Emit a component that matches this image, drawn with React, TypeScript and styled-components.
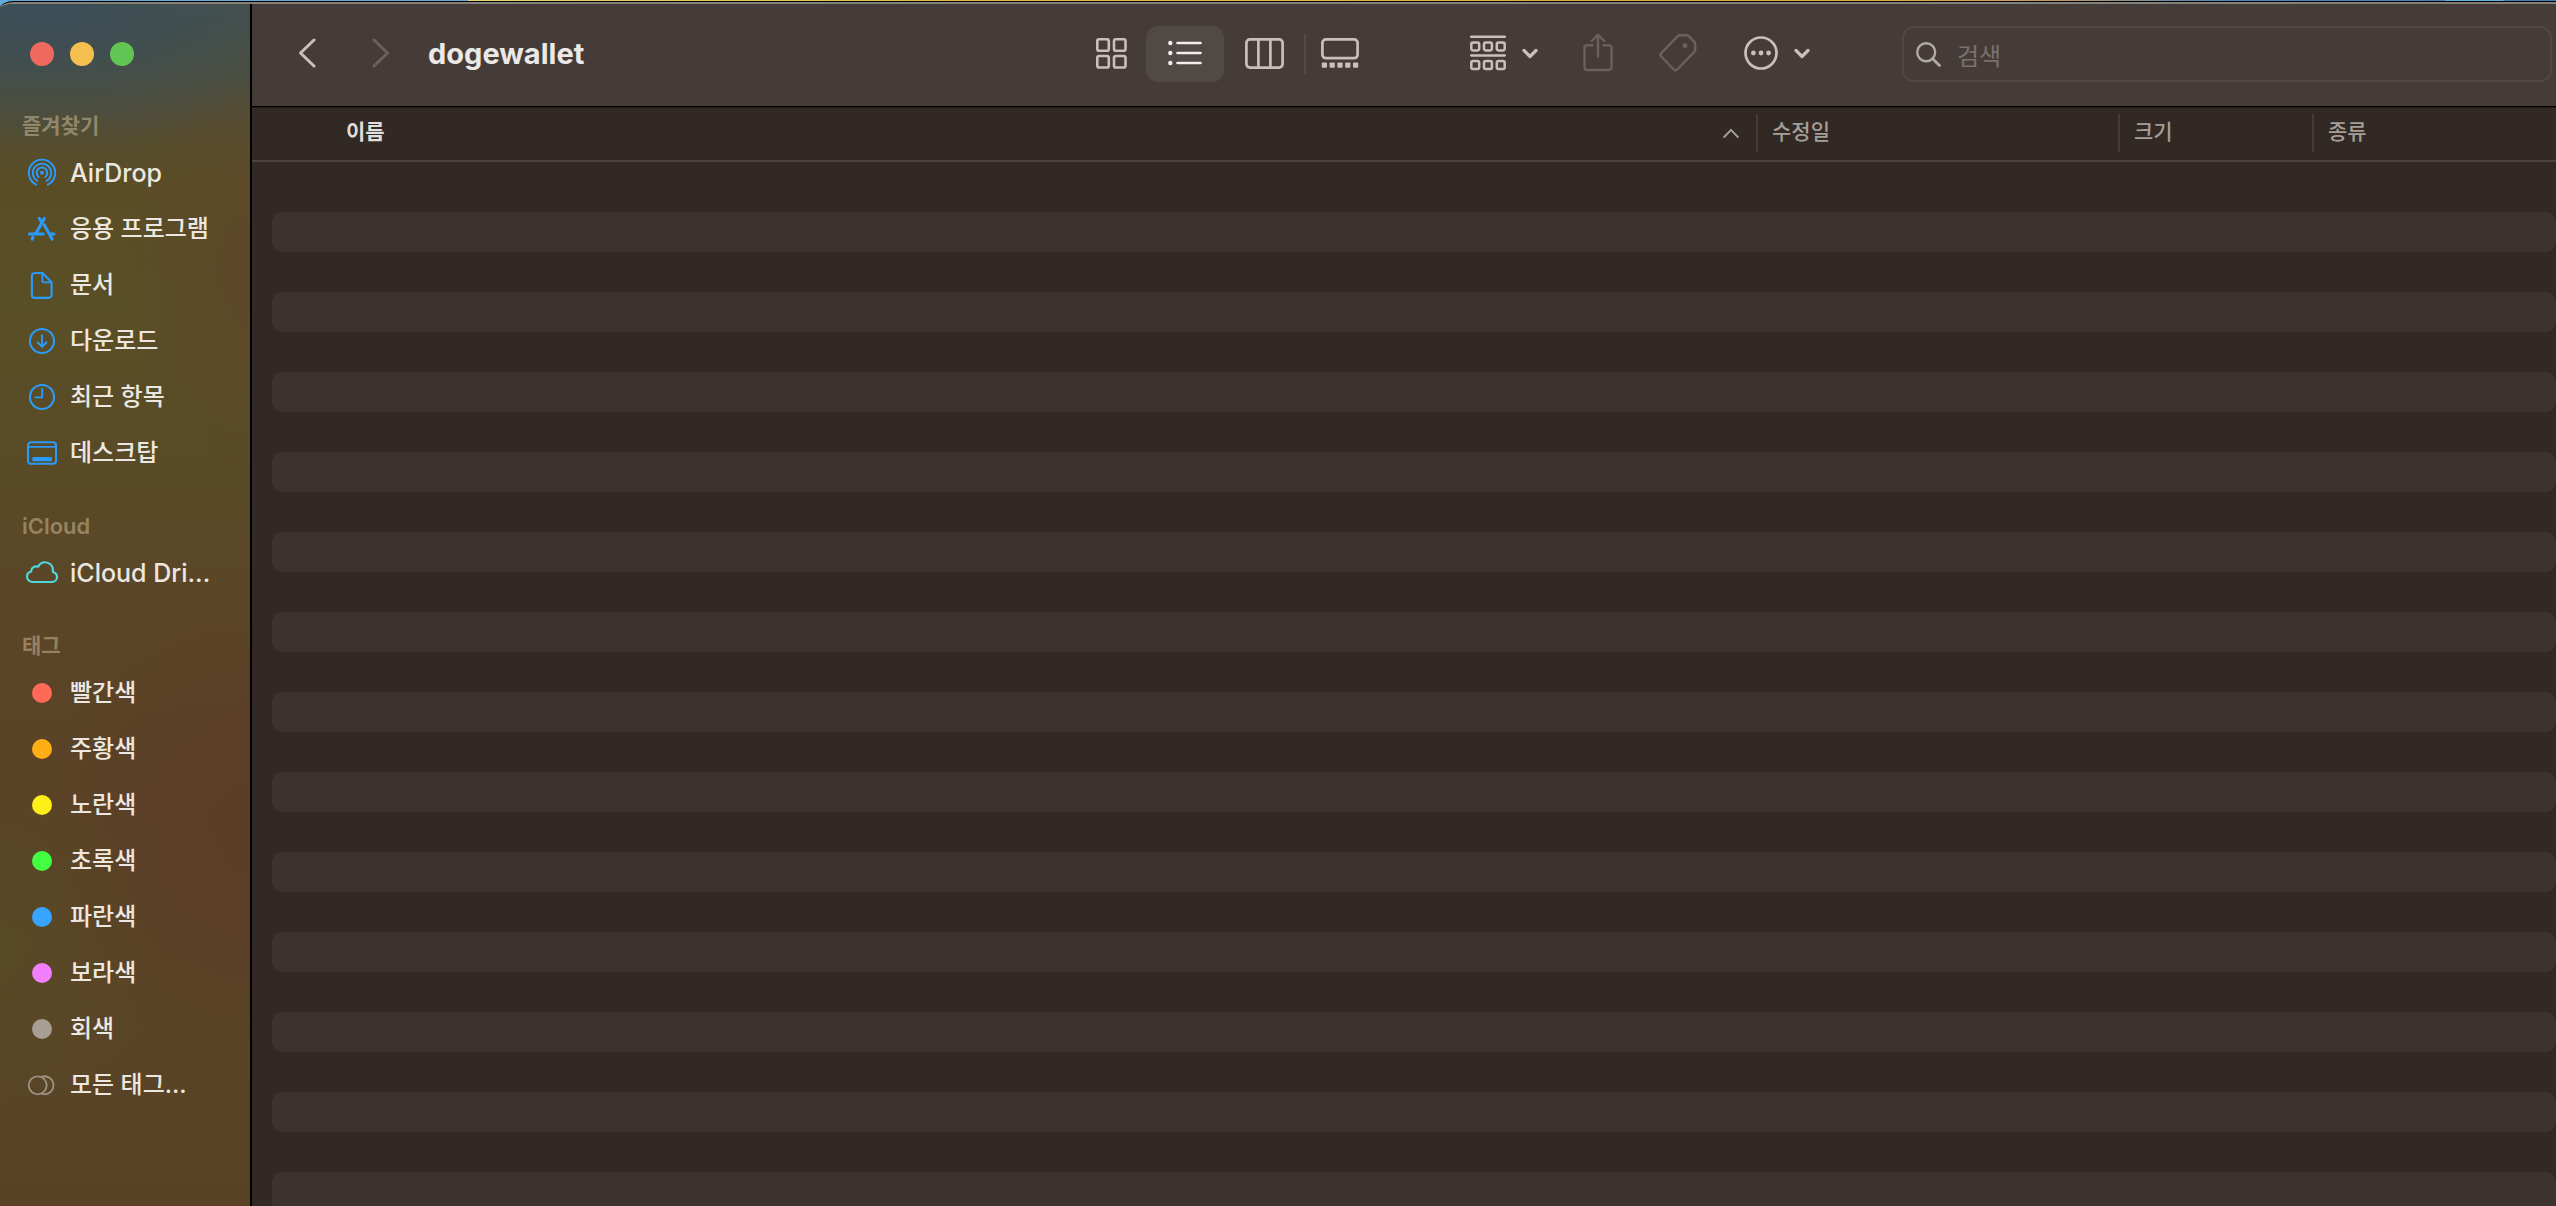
import React from "react";
import styled, { createGlobalStyle } from "styled-components";

const GlobalStyle = createGlobalStyle`
  *, *::before, *::after { box-sizing: border-box; }
  body {
    margin: 0;
    font-family: Inter, "Noto Sans CJK KR", "Noto Sans", sans-serif;
    -webkit-font-smoothing: antialiased;
  }
  button, input { font: inherit; color: inherit; }
  svg { display: block; flex: none; }
`;

const Desktop = styled.div`
  height: 100vh;
  padding-top: 1px;
  display: flex;
  overflow: hidden;
  background: linear-gradient(
    90deg,
    #62a9d8 0 18.3%,
    #e2d56c 18.3%,
    #e3b54e 38%,
    #e0a446 74%,
    #c79a5e 80%,
    #4a86bd 87%,
    #3f7fb8 95.6%,
    #62b4de 95.7% 97.9%,
    #3f7fb8 98%
  );
`;

const Window = styled.div`
  flex: 1;
  min-width: 0;
  display: flex;
  border-top: 1px solid #000;
  border-top-left-radius: 14px 8px;
  overflow: hidden;
  background: #453c39;
`;

const Frame = styled.div`
  flex: 1;
  min-width: 0;
  display: flex;
  border-top: 2px solid #83827a;
  border-top-left-radius: 14px 8px;
  overflow: hidden;
`;

const Sidebar = styled.aside`
  flex: none;
  width: 252px;
  border-right: 2px solid #000;
  background:
    radial-gradient(ellipse 200px 260px at 250px 830px, rgba(91, 60, 39, 0.9), rgba(91, 60, 39, 0) 100%),
    radial-gradient(ellipse 150px 200px at 0 940px, rgba(87, 74, 38, 0.8), rgba(87, 74, 38, 0) 100%),
    radial-gradient(ellipse 130px 200px at 250px 270px, rgba(93, 70, 41, 0.9), rgba(93, 70, 41, 0) 100%),
    radial-gradient(ellipse 330px 150px at 40px 0, rgba(60, 78, 86, 1) 10%, rgba(60, 78, 86, 0) 100%),
    linear-gradient(
      180deg,
      #475049 0,
      #544d33 110px,
      #5a4d26 180px,
      #594f26 300px,
      #594a27 480px,
      #5b4527 620px,
      #5a4226 780px,
      #5a4526 1000px,
      #594126 1200px
    );
`;

const TrafficLights = styled.div`
  display: flex;
  gap: 16px;
  height: 103px;
  padding: 38px 0 0 30px;
`;

const Light = styled.button<{ $color: string }>`
  width: 24px;
  height: 24px;
  padding: 0;
  border: 0;
  border-radius: 50%;
  background: ${(p) => p.$color};
`;

const Section = styled.section`
  & + & { margin-top: 26px; }
`;

const SectionTitle = styled.h2<{ $latin: boolean }>`
  margin: 0;
  padding-left: 22px;
  height: 38px;
  line-height: 38px;
  font-size: ${(p) => (p.$latin ? "22px" : "21px")};
  font-weight: 600;
  color: rgba(240, 220, 180, 0.42);
`;

const SideList = styled.ul`
  list-style: none;
  margin: 0;
  padding: 0;
`;

const SideLink = styled.a<{ $latin: boolean }>`
  display: flex;
  align-items: center;
  gap: 12px;
  height: 56px;
  padding-left: 26px;
  font-size: ${(p) => (p.$latin ? "25px" : "24px")};
  font-weight: 500;
  line-height: 32px;
  white-space: nowrap;
  color: #ece8e1;
  text-decoration: none;
`;

const TagSlot = styled.span`
  display: flex;
  justify-content: center;
  width: 32px;
`;

const TagDot = styled.span<{ $color: string }>`
  width: 20px;
  height: 20px;
  border-radius: 50%;
  background: ${(p) => p.$color};
`;

const Main = styled.main`
  flex: 1;
  min-width: 0;
  display: flex;
  flex-direction: column;
  background: #322924;
`;

const Toolbar = styled.header`
  flex: none;
  display: flex;
  align-items: center;
  height: 103px;
  padding: 0 4px 2px 46px;
  border-bottom: 1px solid #000;
  background: #453c39;
`;

const NavGroup = styled.nav`
  display: flex;
  gap: 56px;
  margin-right: 38px;
`;

const ToolButton = styled.button<{ $width?: number }>`
  display: flex;
  align-items: center;
  justify-content: center;
  gap: 16px;
  width: ${(p) => (p.$width ? `${p.$width}px` : "auto")};
  height: 56px;
  padding: 0 0 2px;
  border: 0;
  border-radius: 12px;
  background: none;
  color: #c9bfbc;

  &:disabled { color: #6a605d; }
  &[aria-pressed="true"] {
    background: #514946;
    color: #f1eeec;
  }
`;

const Title = styled.h1`
  flex: 1 1 0;
  min-width: 0;
  margin: 0;
  padding-right: 26px;
  font-size: 29px;
  font-weight: 700;
  line-height: 36px;
  color: #ebe8e6;
`;

const ViewGroup = styled.div`
  display: flex;
  align-items: center;
`;

const ViewDivider = styled.span`
  width: 2px;
  height: 40px;
  background: #524a47;
`;

const Actions = styled.div`
  display: flex;
  align-items: center;
  gap: 46px;
  padding: 0 92px 0 96px;
`;

const SearchBox = styled.label`
  flex: 1 1 0;
  min-width: 0;
  display: flex;
  align-items: center;
  gap: 16px;
  height: 56px;
  padding: 0 12px;
  border: 2px solid #504845;
  border-radius: 12px;
  color: #b1aaa6;
`;

const SearchInput = styled.input`
  flex: 1;
  min-width: 0;
  height: 40px;
  padding: 4px 0 0;
  border: 0;
  outline: 0;
  background: none;
  font-size: 24px;
  color: #ebe8e6;

  &::placeholder { color: #7a726e; opacity: 1; }
`;

const FileArea = styled.div`
  flex: 1;
  min-height: 0;
  overflow: hidden;
`;

const FileTable = styled.table`
  width: 100%;
  table-layout: fixed;
  border-collapse: separate;
  border-spacing: 0;
`;

const Column = styled.col<{ $width?: number }>`
  width: ${(p) => (p.$width ? `${p.$width}px` : "auto")};
`;

const HeadCell = styled.th`
  height: 55px;
  padding: 6px 0 0;
  vertical-align: top;
  border-top: 1px solid #211b18;
  border-bottom: 2px solid #48413d;
`;

const HeadLabel = styled.div<{ $primary?: boolean }>`
  display: flex;
  align-items: center;
  justify-content: space-between;
  height: 38px;
  padding: ${(p) => (p.$primary ? "0 17px 0 94px" : "0 0 0 14px")};
  border-left: ${(p) => (p.$primary ? "0" : "2px solid #443c38")};
  font-size: 21px;
  font-weight: ${(p) => (p.$primary ? 700 : 500)};
  line-height: 28px;
  color: ${(p) => (p.$primary ? "#e2ded9" : "#a49e99")};

  span { padding-bottom: 2px; }
  svg { color: #a49e99; }
`;

const TopGap = styled.td`
  height: 10px;
  padding: 0;
`;

const RowCell = styled.td`
  height: 40px;
  padding: 0 0 0 20px;
`;

const Stripe = styled.div<{ $filled: boolean }>`
  height: 40px;
  border-radius: 10px;
  background: ${(p) => (p.$filled ? "#3c332f" : "transparent")};
`;

const stroke = {
  fill: "none",
  stroke: "currentColor",
  strokeLinecap: "round" as const,
  strokeLinejoin: "round" as const,
};

const BLUE = "#2b9bfb";

function SideIcon({ color = BLUE, children }: { color?: string; children: React.ReactNode }) {
  return (
    <svg width="32" height="32" viewBox="0 0 32 32" {...stroke} strokeWidth="2.1" color={color} aria-hidden="true">
      {children}
    </svg>
  );
}

const AirDropIcon = () => (
  <SideIcon>
    <g strokeWidth="1.9">
      <path d="M10.2 27.7A13.2 13.2 0 1 1 21.8 27.7" />
      <path d="M11.3 23.7A9.2 9.2 0 1 1 20.7 23.7" />
      <path d="M12.7 20A5.3 5.3 0 1 1 19.3 20" />
    </g>
    <circle cx="16" cy="15.8" r="2" fill="currentColor" stroke="none" />
  </SideIcon>
);

const AppsIcon = () => (
  <SideIcon>
    <g strokeWidth="3">
      <path d="M3.4 21H17.3" />
      <path d="M24 21h4" />
      <path d="M18.3 5.4 10 20.3" />
      <path d="M13.3 5.4l1.8 3" />
      <path d="M18.2 11.8l8 14.5" />
      <path d="M7 24.3l-1 1.9" />
    </g>
  </SideIcon>
);

const DocumentIcon = () => (
  <SideIcon>
    <path d="M8.6 4H16.5L25.6 13.2V26.2a2.7 2.7 0 0 1-2.7 2.7H8.6a2.7 2.7 0 0 1-2.7-2.7V6.7A2.7 2.7 0 0 1 8.6 4Z" />
    <path d="M16.3 4.5V11.7a1.7 1.7 0 0 0 1.7 1.7H25" strokeWidth="1.8" />
  </SideIcon>
);

const DownloadIcon = () => (
  <SideIcon>
    <circle cx="16" cy="16" r="12" />
    <path d="M16 10.3V21.5M11.5 17.3l4.5 4.4 4.5-4.4" strokeWidth="1.9" />
  </SideIcon>
);

const ClockIcon = () => (
  <SideIcon>
    <circle cx="16" cy="16" r="12" />
    <path d="M16.2 7.8V16.4H9.4" strokeWidth="1.9" />
  </SideIcon>
);

const DesktopIcon = () => (
  <SideIcon>
    <rect x="2" y="5.3" width="28" height="21.5" rx="3" />
    <path d="M2.5 9.8H29.5" strokeWidth="1.7" />
    <rect x="6.4" y="20" width="19.5" height="4.3" rx="0.8" fill="currentColor" stroke="none" />
  </SideIcon>
);

const CloudIcon = () => (
  <SideIcon color="#4fd9dc">
    <path d="M7 25C3.5 25 1 22.7 1 19.8C1 17.2 2.8 15 5.3 14.5C5 11.5 7.5 9.2 10.3 9.4C11 9.4 11.7 9.5 12.2 9.7C13.5 7 16 5.3 19 5.3C23.5 5.3 27 8.8 27 13.2C27 13.9 26.9 14.5 26.8 15C29.3 15.6 31 17.6 31 20C31 22.8 28.8 25 26 25Z" />
  </SideIcon>
);

const AllTagsIcon = () => (
  <SideIcon color="#9d9383">
    <circle cx="11.7" cy="16.3" r="9" strokeWidth="1.8" />
    <path d="M15.8 7.7A9 9 0 1 1 15.8 24.9" strokeWidth="1.8" />
  </SideIcon>
);

const ChevronDown = () => (
  <svg width="16" height="12" viewBox="0 0 16 12" {...stroke} strokeWidth="3.2" aria-hidden="true">
    <path d="M2 3.5l6 6 6-6" />
  </svg>
);

const tagCircle = (color: string) => (
  <TagSlot>
    <TagDot $color={color} />
  </TagSlot>
);

const isLatin = (text: string) => /^[A-Za-z]/.test(text);

const sections = [
  {
    title: "즐겨찾기",
    items: [
      { label: "AirDrop", icon: <AirDropIcon /> },
      { label: "응용 프로그램", icon: <AppsIcon /> },
      { label: "문서", icon: <DocumentIcon /> },
      { label: "다운로드", icon: <DownloadIcon /> },
      { label: "최근 항목", icon: <ClockIcon /> },
      { label: "데스크탑", icon: <DesktopIcon /> },
    ],
  },
  { title: "iCloud", items: [{ label: "iCloud Dri...", icon: <CloudIcon /> }] },
  {
    title: "태그",
    items: [
      { label: "빨간색", icon: tagCircle("#ff6a57") },
      { label: "주황색", icon: tagCircle("#ffae14") },
      { label: "노란색", icon: tagCircle("#ffee17") },
      { label: "초록색", icon: tagCircle("#43ff42") },
      { label: "파란색", icon: tagCircle("#37a4ff") },
      { label: "보라색", icon: tagCircle("#f17fff") },
      { label: "회색", icon: tagCircle("#a99e94") },
      { label: "모든 태그...", icon: <AllTagsIcon /> },
    ],
  },
];

const lights = [
  { name: "닫기", color: "#ee6a5f" },
  { name: "최소화", color: "#f5bf4f" },
  { name: "확대", color: "#61c654" },
];

const columns = [
  { label: "이름", width: undefined },
  { label: "수정일", width: 362 },
  { label: "크기", width: 194 },
  { label: "종류", width: 244 },
];

const rows = Array.from({ length: 40 }, (_, i) => i);

export default function App() {
  return (
    <Desktop>
      <GlobalStyle />
      <Window>
        <Frame>
          <Sidebar>
            <TrafficLights>
              {lights.map((l) => (
                <Light key={l.name} $color={l.color} aria-label={l.name} />
              ))}
            </TrafficLights>
            {sections.map((s) => (
              <Section key={s.title}>
                <SectionTitle $latin={isLatin(s.title)}>{s.title}</SectionTitle>
                <SideList>
                  {s.items.map((item) => (
                    <li key={item.label}>
                      <SideLink href="#" $latin={isLatin(item.label)}>
                        {item.icon}
                        <span>{item.label}</span>
                      </SideLink>
                    </li>
                  ))}
                </SideList>
              </Section>
            ))}
          </Sidebar>

          <Main>
            <Toolbar>
              <NavGroup>
                <ToolButton $width={18} aria-label="뒤로">
                  <svg width="18" height="30" viewBox="0 0 18 30" {...stroke} strokeWidth="3">
                    <path d="M16 2 2.5 15 16 28" />
                  </svg>
                </ToolButton>
                <ToolButton $width={18} aria-label="앞으로" disabled>
                  <svg width="18" height="30" viewBox="0 0 18 30" {...stroke} strokeWidth="3">
                    <path d="M2 2 15.500 15 2 28" />
                  </svg>
                </ToolButton>
              </NavGroup>
              <Title>dogewallet</Title>

              <ViewGroup>
                <ToolButton $width={70} aria-label="아이콘" aria-pressed="false">
                  <svg width="31" height="31" viewBox="0 0 31 31" {...stroke} strokeWidth="2.6">
                    <rect x="1.3" y="1.3" width="11.5" height="11.5" rx="1.8" />
                    <rect x="18" y="1.3" width="11.5" height="11.5" rx="1.8" />
                    <rect x="1.3" y="18" width="11.5" height="11.5" rx="1.8" />
                    <rect x="18" y="18" width="11.5" height="11.5" rx="1.8" />
                  </svg>
                </ToolButton>
                <ToolButton $width={78} aria-label="목록" aria-pressed="true">
                  <svg width="34" height="26" viewBox="0 0 34 26" {...stroke} strokeWidth="2.7">
                    <path d="M9.5 3H32.5M9.5 13H32.5M9.5 23H32.5" />
                    <g fill="currentColor" stroke="none">
                      <circle cx="2.3" cy="3" r="2.2" />
                      <circle cx="2.3" cy="13" r="2.2" />
                      <circle cx="2.3" cy="23" r="2.2" />
                    </g>
                  </svg>
                </ToolButton>
                <ToolButton $width={80} aria-label="계층" aria-pressed="false">
                  <svg width="39" height="31" viewBox="0 0 39 31" {...stroke} strokeWidth="2.7">
                    <rect x="1.4" y="1.4" width="36.2" height="28.2" rx="3.5" />
                    <path d="M13.4 1.5V29.5M25.4 1.5V29.5" strokeLinecap="butt" />
                  </svg>
                </ToolButton>
                <ViewDivider />
                <ToolButton $width={68} aria-label="갤러리" aria-pressed="false">
                  <svg width="38" height="31" viewBox="0 0 38 31" {...stroke} strokeWidth="2.7">
                    <rect x="1.4" y="1.4" width="35.2" height="18.8" rx="3.5" />
                    <g fill="currentColor" stroke="none">
                      {[0.8, 8.6, 16.4, 24.2, 32].map((x) => (
                        <rect key={x} x={x} y="24.5" width="5.2" height="5.2" rx="0.8" />
                      ))}
                    </g>
                  </svg>
                </ToolButton>
              </ViewGroup>

              <Actions>
                <ToolButton aria-label="그룹화">
                  <svg width="36" height="36" viewBox="0 0 36 36" {...stroke} strokeWidth="2.5">
                    <path d="M1.2 1.7H34.8M1.2 20.4H34.8" />
                    {[1.3, 14, 26.8].map((x) => (
                      <g key={x}>
                        <rect x={x} y="7.5" width="7.9" height="7.9" rx="1.8" />
                        <rect x={x} y="26.1" width="7.9" height="7.9" rx="1.8" />
                      </g>
                    ))}
                  </svg>
                  <ChevronDown />
                </ToolButton>
                <ToolButton $width={28} aria-label="공유" disabled>
                  <svg width="30" height="40" viewBox="0 0 30 40" {...stroke} strokeWidth="2.4">
                    <path d="M9.5 12.2H4a2.5 2.5 0 0 0-2.5 2.5V34.5A2.500 2.500 0 0 0 4 37H26a2.500 2.500 0 0 0 2.500-2.500V14.700A2.500 2.500 0 0 0 26 12.200H20.500" />
                    <path d="M15 1.800V23.500M8.800 8l6.200-6.400L21.200 8" />
                  </svg>
                </ToolButton>
                <ToolButton $width={40} aria-label="태그 편집" disabled>
                  <svg width="38" height="38" viewBox="0 0 38 38" {...stroke} strokeWidth="2.4">
                    <path d="M18.7 2.2Q19.6 1.3 20.9 1.3H27.5Q28.8 1.3 29.7 2.2L35.2 7.7Q36.2 8.7 36.2 10V15.6Q36.2 16.9 35.3 17.8L18.2 35.5Q16.5 37.2 14.8 35.5L2.2 22.5Q0.6 20.8 2.2 19.1Z" />
                    <circle cx="26" cy="11.7" r="2.4" fill="currentColor" stroke="none" />
                  </svg>
                </ToolButton>
                <ToolButton aria-label="더 보기">
                  <svg width="34" height="34" viewBox="0 0 34 34" {...stroke} strokeWidth="2.7">
                    <circle cx="17" cy="17" r="15.5" />
                    <g fill="currentColor" stroke="none">
                      <circle cx="9.4" cy="17" r="2.4" />
                      <circle cx="17" cy="17" r="2.4" />
                      <circle cx="24.6" cy="17" r="2.4" />
                    </g>
                  </svg>
                  <ChevronDown />
                </ToolButton>
              </Actions>

              <SearchBox>
                <svg width="25" height="25" viewBox="0 0 25 25" {...stroke} strokeWidth="2.4" aria-hidden="true">
                  <circle cx="10.2" cy="10.2" r="9" />
                  <path d="M16.7 16.7 23.5 23.5" strokeWidth="2.8" />
                </svg>
                <SearchInput type="search" placeholder="검색" aria-label="검색" />
              </SearchBox>
            </Toolbar>

            <FileArea>
              <FileTable>
                <colgroup>
                  {columns.map((c) => (
                    <Column key={c.label} $width={c.width} />
                  ))}
                </colgroup>
                <thead>
                  <tr>
                    {columns.map((c, i) => (
                      <HeadCell key={c.label} scope="col" aria-sort={i === 0 ? "ascending" : undefined}>
                        <HeadLabel $primary={i === 0}>
                          <span>{c.label}</span>
                          {i === 0 && (
                            <svg width="16" height="10" viewBox="0 0 16 10" {...stroke} strokeWidth="1.9" aria-hidden="true">
                              <path d="M1.2 9 8 1.8 14.8 9" />
                            </svg>
                          )}
                        </HeadLabel>
                      </HeadCell>
                    ))}
                  </tr>
                </thead>
                <tbody>
                  <tr>
                    <TopGap colSpan={columns.length} />
                  </tr>
                  {rows.map((i) => (
                    <tr key={i}>
                      <RowCell colSpan={columns.length}>
                        <Stripe $filled={i % 2 === 1} />
                      </RowCell>
                    </tr>
                  ))}
                </tbody>
              </FileTable>
            </FileArea>
          </Main>
        </Frame>
      </Window>
    </Desktop>
  );
}
